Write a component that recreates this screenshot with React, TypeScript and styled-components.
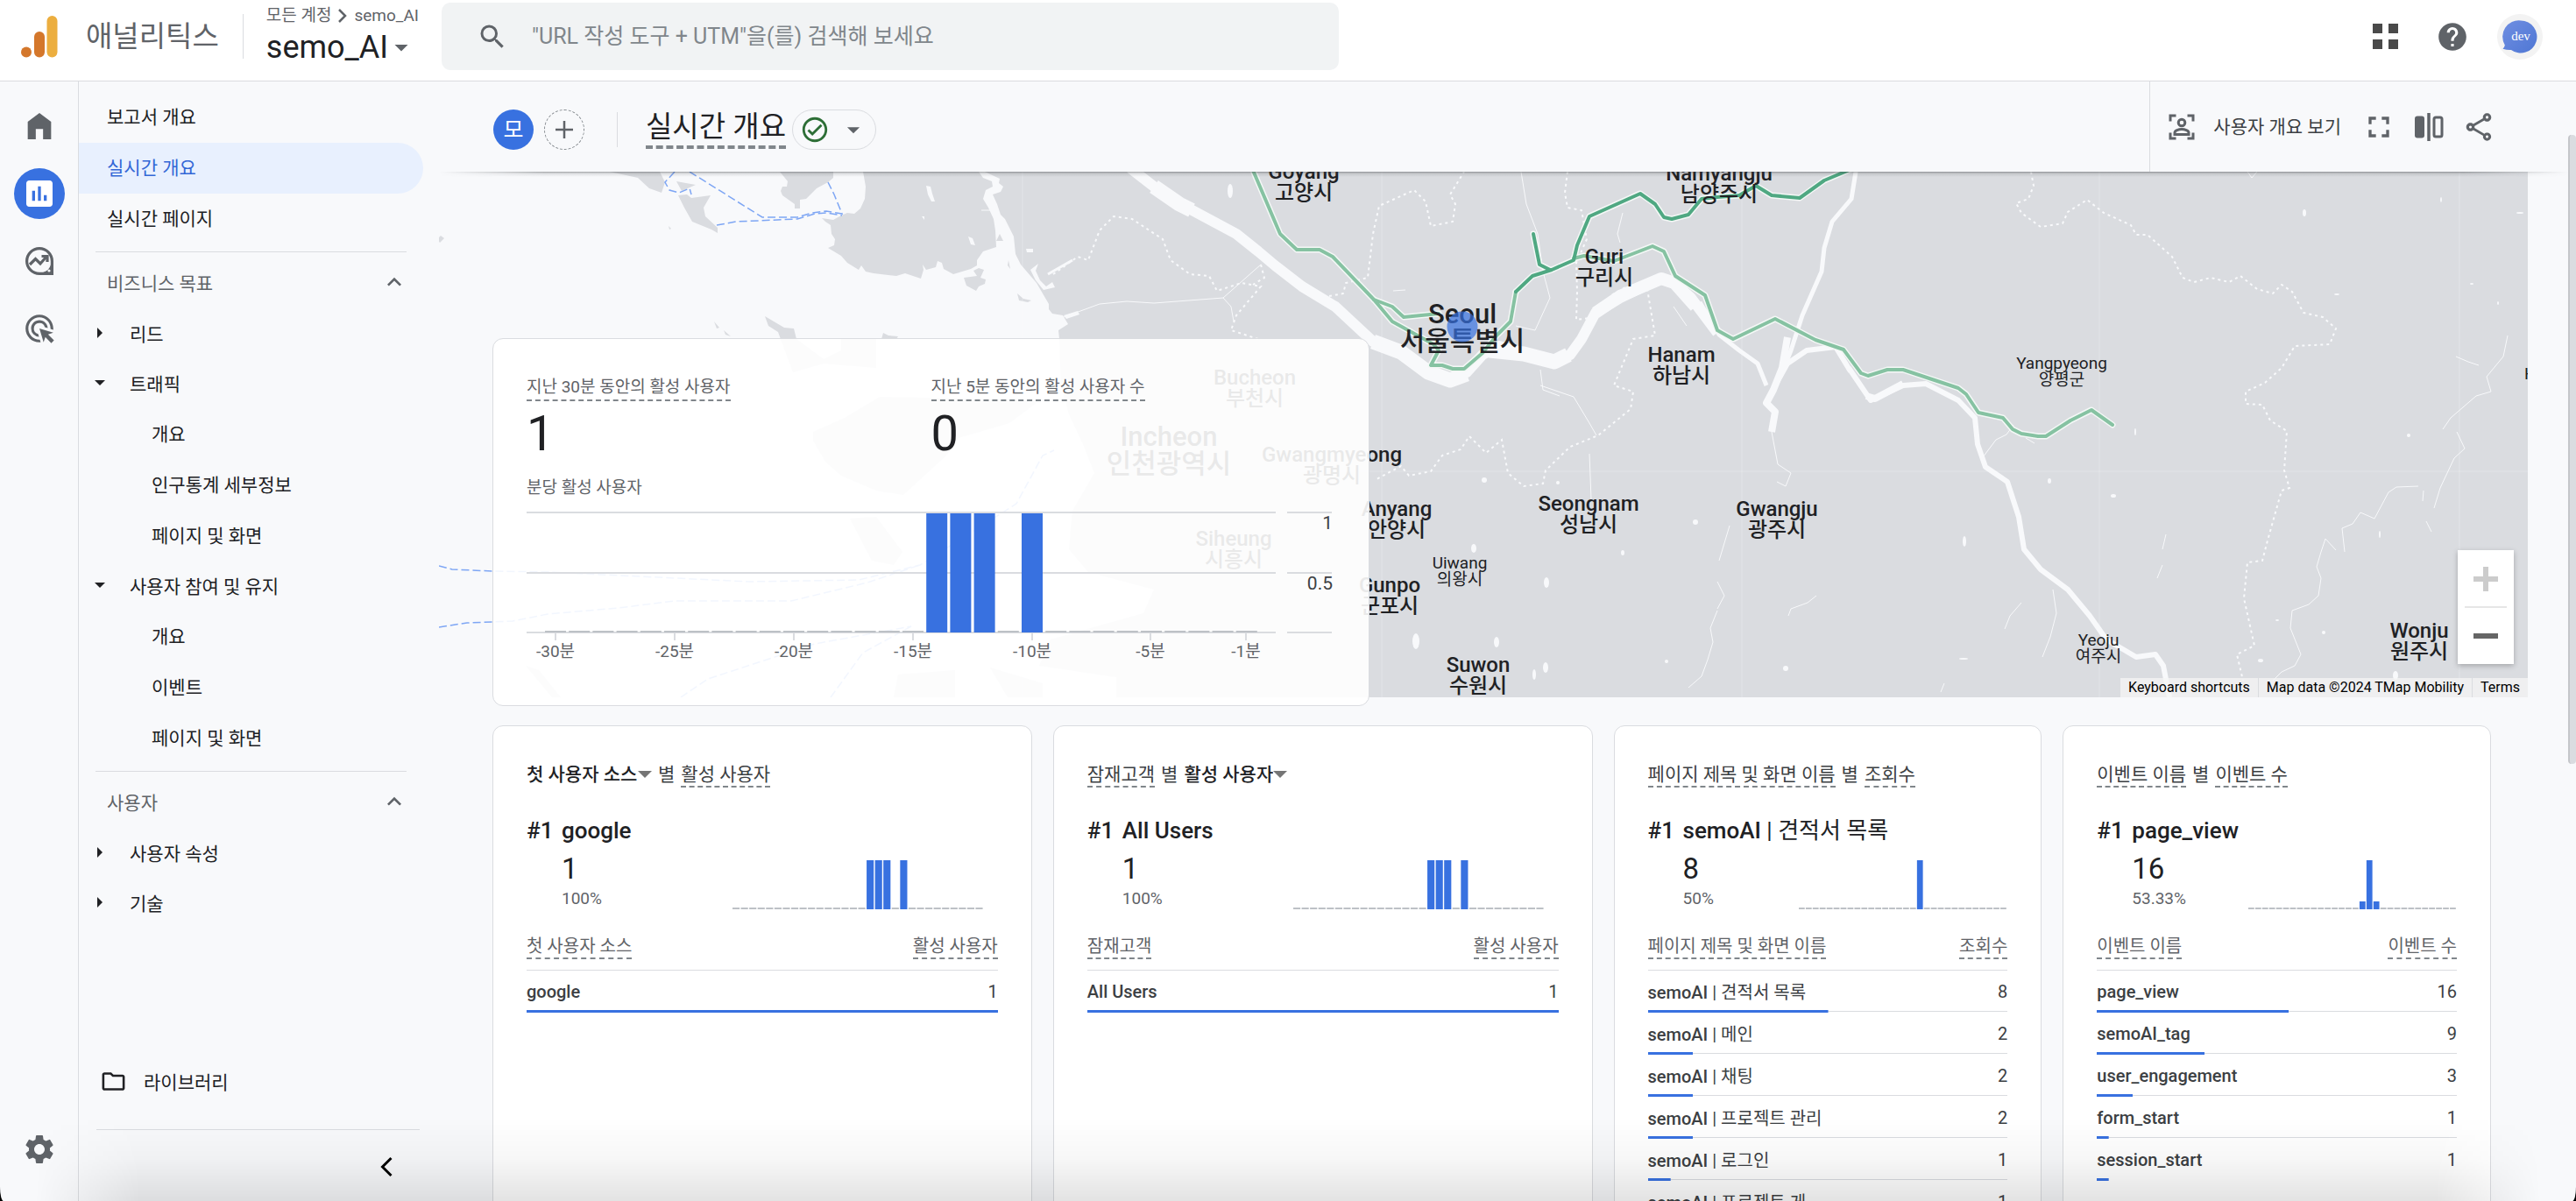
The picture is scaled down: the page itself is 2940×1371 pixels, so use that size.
import React from "react";
import styled, { createGlobalStyle, css } from "styled-components";
import {
  MdAdsClick,
  MdArrowDropDown,
  MdFullscreen,
  MdHelp,
  MdInsertChart,
  MdKeyboardArrowUp,
  MdOutlineCheckCircle,
  MdOutlineFolder,
  MdOutlineShare,
  MdSearch,
  MdSettings,
} from "react-icons/md";

const color = {
  text: "#202124",
  soft: "#3c4043",
  muted: "#5f6368",
  faint: "#80868b",
  line: "#dadce0",
  page: "#f8f9fb",
  land: "#dadce0",
  blue: "#3871e0",
  activeBg: "#e8f0fe",
  lightGreen: "#86c2a2",
  darkGreen: "#4fa882",
};

const GlobalStyle = createGlobalStyle`
  * { box-sizing: border-box; }
  body {
    margin: 0;
    background: #000;
    color: ${color.text};
    font-family: Roboto, "Noto Sans CJK KR", sans-serif;
    font-size: 21px;
  }
  button, input, select {
    font: inherit;
    color: inherit;
    background: none;
    border: 0;
    padding: 0;
    margin: 0;
  }
  button { cursor: pointer; }
  a { color: inherit; text-decoration: none; }
  ul { list-style: none; margin: 0; padding: 0; }
  h1, h2, p { margin: 0; font-weight: 400; }
`;

/* ---------- shell ---------- */

const Shell = styled.div`
  position: relative;
  display: flex;
  flex-direction: column;
  height: 100vh;
  overflow: hidden;
  background: ${color.page};
  border-radius: 0 0 4px 4px / 0 0 16px 16px;

  &::after {
    content: "";
    position: absolute;
    left: 0;
    right: 0;
    bottom: 0;
    height: 96px;
    pointer-events: none;
    background: linear-gradient(to bottom, rgba(0, 0, 0, 0), rgba(0, 0, 0, 0.03) 50%, rgba(0, 0, 0, 0.11));
    mask-image: linear-gradient(to right, transparent 40px, #000 160px, #000 calc(100% - 160px), transparent calc(100% - 40px));
  }
`;

const Body = styled.div`
  flex: 1;
  display: flex;
  min-height: 0;
`;

/* ---------- header ---------- */

const Header = styled.header`
  display: flex;
  align-items: center;
  height: 93px;
  flex: none;
  padding: 0 38px 9px 0;
  background: #fff;
  border-bottom: 1px solid ${color.line};
`;

const Brand = styled.div`
  display: flex;
  align-items: center;
  width: 504px;
  padding-left: 24px;
`;

const ProductName = styled.span`
  margin-left: 32px;
  padding-right: 27px;
  font-size: 33px;
  line-height: 51px;
  color: ${color.muted};
  border-right: 1px solid ${color.line};
  white-space: nowrap;
`;

const Property = styled.div`
  margin-left: 26px;
  white-space: nowrap;
`;

const Crumbs = styled.p`
  display: flex;
  align-items: center;
  gap: 8px;
  font-size: 19px;
  line-height: 24px;
  color: ${color.muted};
`;

const PropertyButton = styled.button`
  display: flex;
  align-items: center;
  font-size: 36px;
  line-height: 48px;
  svg { margin-left: -3px; color: ${color.muted}; }
`;

const SearchBox = styled.label`
  display: flex;
  align-items: center;
  flex: 0 1 1024px;
  height: 77px;
  padding: 0 40px;
  gap: 27px;
  color: ${color.muted};
  background: #f1f3f4;
  border-radius: 10px;
`;

const SearchInput = styled.input`
  flex: 1;
  font-size: 25px;
  outline: 0;
  &::placeholder { color: ${color.faint}; opacity: 1; }
`;

const HeaderActions = styled.div`
  display: flex;
  gap: 25px;
  margin-left: auto;
  color: ${color.muted};
`;

const HeaderButton = styled.button`
  display: grid;
  place-items: center;
  width: 52px;
  height: 52px;
  border-radius: 50%;
`;

/* ---------- icon rail ---------- */

const Rail = styled.nav`
  display: flex;
  flex-direction: column;
  align-items: center;
  gap: 19px;
  width: 90px;
  flex: none;
  padding: 22px 0 30px;
  border-right: 1px solid ${color.line};
`;

const RailLink = styled.a<{ $active?: boolean; $bottom?: boolean }>`
  display: grid;
  place-items: center;
  width: 58px;
  height: 58px;
  border-radius: 50%;
  color: ${(p) => (p.$active ? "#fff" : color.muted)};
  background: ${(p) => (p.$active ? color.blue : "transparent")};
  ${(p) => p.$bottom && css`margin-top: auto;`}
`;

/* ---------- report menu ---------- */

const Menu = styled.nav`
  display: flex;
  flex-direction: column;
  width: 411px;
  flex: none;
  padding-top: 12px;
`;

const MenuLink = styled.a<{ $active?: boolean; $level?: number }>`
  display: flex;
  align-items: center;
  height: 58px;
  margin-right: 18px;
  padding: 0 0 4px ${(p) => (p.$level === 2 ? 83 : 32)}px;
  border-radius: 0 29px 29px 0;
  color: ${(p) => (p.$active ? "#3367d6" : color.text)};
  background: ${(p) => (p.$active ? color.activeBg : "transparent")};
`;

const MenuToggle = styled.button`
  display: flex;
  align-items: center;
  gap: 26px;
  width: 100%;
  height: 57px;
  padding: 0 0 4px 16px;
`;

const MenuHeading = styled.button`
  display: flex;
  align-items: center;
  justify-content: space-between;
  height: 58px;
  padding: 0 35px 4px 32px;
  color: ${color.muted};
`;

const MenuRule = styled.hr`
  flex: none;
  height: 1px;
  margin: 8px 37px 7px 19px;
  border: 0;
  background: ${color.line};
`;

const MenuFoot = styled.div`
  margin-top: auto;
`;

const LibraryLink = styled.a`
  display: flex;
  align-items: center;
  gap: 19px;
  height: 58px;
  padding: 0 0 4px 24px;
`;

const FootRule = styled.hr`
  height: 1px;
  margin: 24px 22px 0 20px;
  border: 0;
  background: ${color.line};
`;

const CollapseRow = styled.div`
  display: flex;
  justify-content: flex-end;
  height: 81px;
  padding: 22px 40px 0 0;
`;

const IconButton = styled.button`
  display: grid;
  place-items: center;
  width: 40px;
  height: 40px;
`;

/* ---------- page toolbar ---------- */

const Main = styled.main`
  position: relative;
  flex: 1;
  min-width: 0;
`;

const Toolbar = styled.div`
  position: relative;
  z-index: 2;
  display: flex;
  align-items: center;
  height: 103px;
  padding-left: 62px;
  background: ${color.page};

  &::after {
    content: "";
    position: absolute;
    left: 0;
    right: 8px;
    top: 100%;
    height: 6px;
    background: linear-gradient(to bottom, rgba(60, 64, 67, 0.45), rgba(60, 64, 67, 0.12) 40%, rgba(60, 64, 67, 0));
    mask-image: linear-gradient(to right, transparent, #000 120px, #000 calc(100% - 120px), transparent);
  }
`;

const ToolbarLeft = styled.div`
  display: flex;
  align-items: center;
  padding-top: 6px;
`;

const RoundButton = styled.button<{ $filled?: boolean }>`
  display: grid;
  place-items: center;
  width: 46px;
  height: 46px;
  margin-right: 12px;
  padding-bottom: ${(p) => (p.$filled ? 4 : 0)}px;
  border-radius: 50%;
  font-size: 25px;
  color: ${(p) => (p.$filled ? "#fff" : color.muted)};
  background: ${(p) => (p.$filled ? color.blue : "transparent")};
  border: ${(p) => (p.$filled ? "0" : `1px dashed ${color.faint}`)};
`;

const ToolbarRule = styled.span`
  width: 1px;
  height: 40px;
  margin: 0 32px 0 25px;
  background: ${color.line};
`;

const PageTitle = styled.h1`
  padding-bottom: 2px;
  font-size: 33px;
  line-height: 38px;
  border-bottom: 4px dashed ${color.faint};
`;

const StatusPill = styled.button`
  display: flex;
  align-items: center;
  justify-content: space-between;
  width: 96px;
  height: 46px;
  margin-left: 7px;
  padding: 0 8px;
  border: 1px solid ${color.line};
  border-radius: 23px;
  color: ${color.muted};
`;

const ToolbarRight = styled.div`
  display: flex;
  align-items: center;
  align-self: stretch;
  gap: 17px;
  margin-left: auto;
  padding: 0 91px 0 16px;
  border-left: 1px solid ${color.line};
  color: ${color.muted};
`;

const OverviewButton = styled.button`
  display: flex;
  align-items: center;
  gap: 16px;
  margin-right: 6px;
  color: ${color.soft};
  white-space: nowrap;
  svg { color: ${color.muted}; }
  span { padding-bottom: 4px; }
`;

const ScrollThumb = styled.div`
  position: absolute;
  z-index: 3;
  top: 61px;
  right: 0;
  width: 9px;
  height: 718px;
  border-left: 2px solid #c4c6ca;
  border-radius: 4px;
  background: ${color.line};
`;

/* ---------- map + live card ---------- */

const MapSection = styled.section`
  display: grid;
  > * { grid-area: 1 / 1; }
`;

const MapFrame = styled.div`
  position: relative;
  height: 600px;
  margin-right: 55px;
  overflow: hidden;
`;

const MapDrawing = styled.svg`
  display: block;
  width: 100%;
  height: 100%;
`;

const ZoomControl = styled.div`
  position: absolute;
  right: 16px;
  bottom: 38px;
  width: 64px;
  background: #fff;
  box-shadow: 0 2px 6px rgba(0, 0, 0, 0.25);
`;

const ZoomButton = styled.button<{ $muted?: boolean }>`
  display: grid;
  place-items: center;
  width: 64px;
  height: 65px;
  color: ${(p) => (p.$muted ? "#ccc" : "#666")};
`;

const ZoomRule = styled.div`
  position: absolute;
  left: 8px;
  right: 8px;
  top: 64px;
  height: 2px;
  background: #e6e6e6;
`;

const MapCredits = styled.div`
  position: absolute;
  right: 0;
  bottom: 0;
  display: flex;
  gap: 1px;
  font-size: 16px;
  line-height: 22px;
  color: #000;
  > * {
    padding: 0 9px;
    background: rgba(245, 245, 245, 0.75);
  }
`;

const LiveCard = styled.article`
  z-index: 1;
  align-self: start;
  width: 1001px;
  height: 420px;
  margin: 190px 0 0 61px;
  padding: 41px 38px 0;
  background: rgba(255, 255, 255, 0.9);
  border: 1px solid ${color.line};
  border-radius: 12px;
`;

const LiveStats = styled.div`
  display: grid;
  grid-template-columns: 1fr 1fr;
`;

const LiveStat = styled.div`
  display: flex;
  flex-direction: column;
  align-items: flex-start;
`;

const LiveLabel = styled.p`
  font-size: 19px;
  line-height: 28px;
  color: ${color.muted};
`;

const Hinted = styled.span<{ $tone?: string }>`
  display: inline-block;
  color: ${(p) => p.$tone ?? "inherit"};
  border-bottom: 2px dashed ${color.faint};
`;

const LiveValue = styled.p`
  margin: 3px 0 14px;
  font-size: 56px;
  line-height: 68px;
`;

const LiveChart = styled.svg`
  display: block;
  width: 100%;
  margin-top: 6px;
`;

/* ---------- report cards ---------- */

const Cards = styled.section`
  display: grid;
  grid-template-columns: 63fr 63fr 50fr 50fr;
  gap: 24px;
  margin: 22px 97px 0 61px;
`;

const Card = styled.article`
  min-width: 0;
  height: 600px;
  padding: 42px 38px 0;
  background: #fff;
  border: 1px solid ${color.line};
  border-radius: 12px;
`;

const CardTitle = styled.h2`
  display: flex;
  align-items: flex-start;
  gap: 7px;
  height: 28px;
  font-size: 21px;
  line-height: 26px;
  color: ${color.soft};
  white-space: nowrap;
`;

const Picker = styled.label`
  display: flex;
  align-items: center;
  font-weight: 500;
  color: ${color.text};
`;

const PickerSelect = styled.select`
  appearance: none;
  height: 26px;
  line-height: 26px;
  outline: 0;
`;

const Top = styled.div`
  display: grid;
  grid-template-columns: 40px 1fr;
  margin-top: 33px;
  font-size: 26px;
  line-height: 32px;
  font-weight: 500;
  white-space: nowrap;
`;

const Regular = styled.span`
  font-weight: 400;
`;

const Summary = styled.div`
  display: flex;
  justify-content: space-between;
  align-items: flex-end;
  margin-top: 8px;
  padding-left: 40px;
`;

const SummaryValue = styled.p`
  font-size: 33px;
  line-height: 40px;
`;

const SummaryShare = styled.p`
  font-size: 19px;
  line-height: 28px;
  color: ${color.muted};
`;

const Spark = styled.svg<{ $inset: number }>`
  width: ${(p) => (p.$inset ? 287 : 238)}px;
  height: 56px;
  margin: 0 ${(p) => p.$inset}px 2px 0;
`;

const Table = styled.table`
  width: 100%;
  margin-top: 27px;
  border-collapse: collapse;
  font-size: 20px;
  color: ${color.soft};
`;

const HeadCell = styled.th<{ $end?: boolean }>`
  padding: 0 0 12px;
  font-size: 20px;
  font-weight: 400;
  line-height: 26px;
  text-align: ${(p) => (p.$end ? "right" : "left")};
  border-bottom: 1px solid ${color.line};
`;

const Row = styled.tr<{ $share: number }>`
  height: 48px;
  background-image: linear-gradient(${color.blue}, ${color.blue}), linear-gradient(${color.line}, ${color.line});
  background-repeat: no-repeat;
  background-position: left bottom, left bottom 1px;
  background-size: ${(p) => p.$share}% 3px, 100% 1px;
  &:last-child { background-size: ${(p) => p.$share}% 3px, 0 0; }
`;

const NameCell = styled.td`
  padding: 0;
  font-weight: 500;
  white-space: nowrap;
`;

const CountCell = styled.td`
  padding: 0;
  text-align: right;
`;

/* ---------- icons ---------- */

const Logo = () => (
  <svg width="42" height="48" viewBox="0 0 42 48" aria-hidden="true">
    <circle cx="6" cy="41.5" r="6" fill="#d4772b" />
    <rect x="15" y="18" width="12" height="29.5" rx="6" fill="#d4772b" />
    <rect x="29.5" y="0" width="12" height="47.5" rx="6" fill="#ecae3f" />
  </svg>
);

const HomeIcon = () => (
  <svg width="40" height="40" viewBox="0 0 24 24" fill="currentColor" aria-hidden="true">
    <path d="M4 21V9l8-6 8 6v12h-5.5v-7h-5v7z" />
  </svg>
);

const ExploreIcon = () => (
  <svg width="34" height="34" viewBox="0 0 34 34" fill="none" stroke="currentColor" strokeWidth="3.2" aria-hidden="true">
    <path d="M17 31.4A14.4 14.4 0 1 1 31.4 17v14.4z" />
    <path d="M6 21l6.5-6.5 5.5 5.5 7-8" />
    <path d="M19.5 11.5h6.5v6.5" />
    <path d="M31.4 22v9.4H22a14 14 0 0 0 9.4-9.4z" fill="currentColor" />
    <circle cx="28" cy="28" r="1.6" fill={color.page} stroke="none" />
  </svg>
);

const AppsIcon = () => (
  <svg width="29" height="29" viewBox="0 0 29 29" fill="#4a4a4a" aria-hidden="true">
    <path d="M0 0h11v11H0zM18 0h11v11H18zM0 18h11v11H0zM18 18h11v11H18z" />
  </svg>
);

const AvatarIcon = () => (
  <svg width="52" height="52" viewBox="0 0 52 52" aria-hidden="true">
    <defs>
      <linearGradient id="avatarFill" x1="0" y1="0" x2="1" y2="1">
        <stop offset="0" stopColor="#6f8ee2" />
        <stop offset="1" stopColor="#4f77d4" />
      </linearGradient>
    </defs>
    <circle cx="26" cy="26" r="26" fill="#f3f3f3" />
    <path
      d="M27 7.5a18.5 18.5 0 1 1-11 33.4c-3 .2-6.5-.2-9.5-1.2 1.2-1.2 2-2.6 2.3-4.3A18.500 18.500 0 0 1 27 7.5z"
      fill="url(#avatarFill)"
    />
    <text x="27" y="30" fontFamily="'Liberation Serif', serif" fontSize="15" fill="#fff" textAnchor="middle">
      dev
    </text>
  </svg>
);

const PersonFrameIcon = () => (
  <svg width="40" height="40" viewBox="0 0 40 40" fill="none" stroke="currentColor" strokeWidth="3" aria-hidden="true">
    <path d="M7 13.5V7h6.5M26.5 7H33v6.5M33 26.5V33h-6.5M13.5 33H7v-6.5" />
    <circle cx="20" cy="15" r="3.8" />
    <path d="M12 28.5v-2c0-2.5 4.5-4 8-4s8 1.5 8 4v2z" />
  </svg>
);

const CompareIcon = () => (
  <svg width="40" height="40" viewBox="0 0 40 40" fill="none" stroke="currentColor" aria-hidden="true">
    <rect x="4" y="7.5" width="11" height="25" rx="3" fill="currentColor" stroke="none" />
    <path d="M20 4v32" strokeWidth="3.5" />
    <rect x="26" y="9" width="9" height="22" rx="2" strokeWidth="3" />
  </svg>
);

const PlusIcon = () => (
  <svg width="24" height="24" viewBox="0 0 24 24" stroke="currentColor" strokeWidth="2.5" aria-hidden="true">
    <path d="M12 2v20M2 12h20" />
  </svg>
);

const CrumbArrow = () => (
  <svg width="10" height="18" viewBox="0 0 10 18" fill="none" stroke="currentColor" strokeWidth="2.5" aria-hidden="true">
    <path d="M1 2l7 7-7 7" />
  </svg>
);

const CollapseIcon = () => (
  <svg width="16" height="24" viewBox="0 0 16 24" fill="none" stroke="#000" strokeWidth="3" aria-hidden="true">
    <path d="M13.5 2L3.5 12l10 10" />
  </svg>
);

const ToggleArrow = ({ open }: { open?: boolean }) => (
  <svg width="16" height="16" viewBox="0 0 16 16" fill={color.text} aria-hidden="true">
    <path d={open ? "M2 5h12L8 11z" : "M5 2v12l6-6z"} />
  </svg>
);

const CaretIcon = () => (
  <svg width="16" height="10" viewBox="0 0 16 10" fill="#757575" aria-hidden="true">
    <path d="M0 1h16L8 9z" />
  </svg>
);

const ZoomGlyph = ({ plus }: { plus?: boolean }) => (
  <svg width="30" height="30" viewBox="0 0 30 30" fill="currentColor" aria-hidden="true">
    <path d={plus ? "M12 1h6v11h11v6H18v11h-6V18H1v-6h11z" : "M1 12h28v6H1z"} />
  </svg>
);

/* ---------- map ---------- */

type Place = [x: number, y: number, latin: string, korean: string, size: number];

const places: Place[] = [
  [1488, 204, "Goyang", "고양시", 24],
  [1962, 206, "Namyangju", "남양주시", 24],
  [1831, 301, "Guri", "구리시", 24],
  [1669, 369, "Seoul", "서울특별시", 31],
  [1919, 413, "Hanam", "하남시", 24],
  [2353, 421, "Yangpyeong", "양평군", 19],
  [1432, 439, "Bucheon", "부천시", 24],
  [1334, 509, "Incheon", "인천광역시", 31],
  [1520, 527, "Gwangmyeong", "광명시", 24],
  [1594, 589, "Anyang", "안양시", 24],
  [1813, 583, "Seongnam", "성남시", 24],
  [2028, 589, "Gwangju", "광주시", 24],
  [1408, 623, "Siheung", "시흥시", 24],
  [1586, 676, "Gunpo", "군포시", 24],
  [1666, 649, "Uiwang", "의왕시", 19],
  [1687, 767, "Suwon", "수원시", 24],
  [2395, 737, "Yeoju", "여주시", 19],
  [2761, 728, "Wonju", "원주시", 24],
];

const land = [
  "M696 196H753L759 208 755 220 741 215 728 203z",
  "M772 207L794 211 778 218z",
  "M774 223L784 222 789 226 811 223 803 237 805 247 819 260 819 266 812 262 790 253 781 237z",
  "M499 273L503 269 507 272 502 277z",
  "M763 258l3 3-2 1z",
  "M890 196L899 207 898 213 893 213 891 218 893 223 907 233V238H913V228L920 227 932 215 945 208 951 203V196z",
  "M985 196L988 213 987 227 982 238 975 244 967 243 960 246 951 251 938 249 942 253 948 257 949 267 953 273 952 280 945 283 960 292 967 300 980 308 983 303 988 310 997 312 1023 315 1033 312 1051 318 1054 308 1053 302 1057 308 1068 305 1070 298 1075 300 1077 307 1088 313 1108 307 1115 303V297L1122 287 1137 282 1136 263 1134 250 1128 237 1122 227 1125 217 1133 213 1132 207 1122 203 1117 196z",
  "M1100 317L1115 315 1111 309 1117 306 1123 308 1119 317 1125 319 1124 324 1117 327 1114 332 1103 326z",
  "M1161 335L1168 341 1177 343 1173 345 1163 343z",
  "M1141 267l4 8h-8z",
  "M1151 297l2 10-3-4z",
  "M873 361L895 374 906 375 909 387 940 410 960 400 960 386 1000 386 1000 420 940 415 905 425 888 379 877 372z",
  "M815 367l6 7-3 1zM826 377l8 7-6-2z",
  "M1006 387l2-7 6 3 11 1-2 3zM1045 386h6v1h-6z",
  "M928 493L964 477 1004 453 1187 457 1152 483 1094 500 1080 520 1031 565 1000 560 960 543 942 527 928 503z",
  "M970 592L1000 590 1030 630 1020 645 995 640z",
  "M1020 796L1025 770 1090 765 1090 796z",
  "M1130 762L1190 780 1190 796H1150z",
  "M600 760L615 765 640 796H630z",
  "M1124 196L1141 204 1140 209 1145 213 1142 219 1133 222 1138 233 1142 245 1147 250 1157 270 1159 290 1165 302 1183 323 1197 347 1197 353 1201 358 1213 360 1219 370 1208 377 1209 387 1211 440 1220 473 1236 507 1249 540 1224 583 1220 627 1242 653 1317 673 1305 700 1199 730 1186 760 1274 773V796H2885V196z",
];

const inlets = [
  "M1057 212L1062 213 1064 221 1067 230 1063 230 1059 222z",
  "M1105 270L1110 272 1113 280 1108 279z",
  "M1052 247h3v4z",
  "M1171 284h8v4h-7z",
  "M1176 308L1185 301 1182 309 1187 320 1194 327 1201 322 1204 328 1191 331 1182 320z",
  "M1214 360L1230 355 1232 359 1217 364z",
];

const han =
  "M1290 192L1317 213 1342 230 1411 267 1436 287 1455 303 1486 327 1524 350 1567 390 1599 400 1630 423 1655 433 1674 425 1692 405 1711 395 1739 403 1774 413 1792 405 1805 387 1821 357 1849 340 1874 328 1896 318 1911 323 1930 340 1960 380";
const southHan =
  "M2110 420L2135 457 2172 440 2198 438 2235 457 2254 477 2257 507 2266 533 2291 550 2304 590 2310 627 2329 650 2360 673 2385 703 2404 730 2438 750 2460 747 2469 760 2476 796";
const northHan =
  "M2119 190L2113 227 2091 253 2082 283 2079 310 2057 360 2044 400 2032 430";

const streams = [
  "M2022 493L2029 530 2044 540 2038 555 2028 550",
  "M1214 362L1255 347 1286 344 1317 346 1396 340 1439 302",
  "M1396 340L1405 350 1408 367",
  "M2862 383L2857 407 2838 430 2843 447 2826 452 2797 477 2788 490",
  "M2804 493L2813 512 2801 523 2785 557 2778 580",
  "M2760 555L2735 556 2726 562 2710 592 2694 585 2685 598 2673 603 2676 630",
  "M2666 628L2654 615 2649 630 2644 647 2649 660 2646 680 2635 690 2616 697 2614 717 2626 747 2619 760 2604 767 2594 777",
  "M1758 440L1796 453 1814 483 1822 497",
  "M1814 518L1816 570",
  "M1960 697L1952 717 1955 733 1949 753 1942 772 1927 785",
  "M1736 196L1742 233 1755 267 1761 310 1769 340 1752 377 1730 372",
  "M1852 243L1846 267 1849 277",
  "M1758 422L1761 445 1780 452",
  "M2073 680L2063 688 2044 695 2041 703",
  "M2307 688L2294 703 2288 718",
  "M2343 673L2347 700 2340 727 2331 750",
  "M2263 522L2278 502 2290 496 2298 485M2312 500l10 6",
  "M1910 350L1925 372M1590 332L1604 331M1120 240h18",
  "M1974 600L1962 640M1960 664L1968 680 1960 695",
  "M2472 610L2468 627M2468 645L2462 660",
  "M2565 196L2570 203 2576 196M2766 560L2765 572M2769 595l6 12",
  "M2215 790l4-10M2803 407l14 6 12 4",
];

const boundaries = [
  "M1202 313L1230 293 1242 297 1255 263 1271 247 1292 250 1327 273 1336 297 1358 313 1380 315 1389 332 1417 323 1439 327 1411 360 1405 377 1436 387",
  "M1439 302L1443 317 1430 325",
  "M1517 338L1533 335 1536 323 1561 317 1567 267 1574 235 1614 217 1627 230 1633 258 1658 253 1661 233 1655 222 1671 196",
  "M1789 196L1786 220 1789 237 1805 240 1811 273 1799 300 1800 333 1799 365 1814 363 1839 337 1855 328 1880 330 1889 383 1864 387 1842 440 1864 447 1861 467 1824 497 1792 510 1764 537 1761 552 1739 555 1721 540 1714 502 1696 517 1677 498 1667 513 1646 520 1633 538 1608 543 1599 532 1571 547",
  "M2318 196L2321 212 2315 227 2301 232 2307 243 2329 259 2354 255 2360 242 2382 228 2401 243 2432 257 2438 268 2451 268 2479 293 2491 317 2504 322 2523 317 2544 322 2557 315 2576 330 2594 335 2604 325 2616 333 2629 357 2651 362 2666 375 2659 393 2619 395 2604 420 2585 437 2563 447 2563 461 2582 462 2591 480 2610 492 2607 537 2613 557 2604 560 2588 617 2582 640 2565 642 2561 683 2573 737 2553 747 2560 777",
];

const ferries = [
  "M787 196L870 248 910 248 927 243 943 241 961 244 952 222 945 208",
  "M818 257L840 253 910 250 930 244 943 243 961 246",
  "M770 196L759 208 764 217 775 220 787 215 789 222",
  "M501 646L516 650 562 652 625 653 855 664 980 662 1050 645 1160 575 1190 520 1203 514",
  "M501 716L533 711 585 709 625 701 706 694 770 686 903 686 990 665 1050 645",
  "M777 796L808 775 930 735 1040 715M948 796L985 745 1040 715",
];

const lightRoutes = [
  "M1429 192L1461 267 1480 285 1506 285 1521 293 1568 342 1589 350 1602 362 1642 358",
  "M1568 342L1589 367 1636 393 1642 400 1633 417 1646 417 1658 421 1671 421 1692 403 1708 383 1724 367 1730 333",
  "M1796 295L1808 292 1842 298 1886 281 1899 287 1912 315 1946 337 1960 377 1978 387 2026 364 2072 388 2104 399 2124 426 2132 429 2154 422 2172 422 2235 443 2244 450 2258 471 2286 477 2297 490 2307 495 2326 498 2335 498 2363 480 2387 468 2411 485",
];

const darkRoutes = [
  "M1730 333L1749 315 1771 308 1796 297 1800 280 1814 247 1872 221 1889 233 1899 248 1908 250 1927 245 1942 227 1960 225 1985 223 2004 212 2022 223 2054 226 2082 206 2120 190",
  "M1750 267L1757 302 1769 308",
];

const ponds: [number, number, number, number][] = [
  [1694, 548, 3, 3], [1778, 551, 2, 2], [1682, 626, 3, 5], [1765, 665, 3, 6], [1616, 732, 4, 9],
  [1708, 733, 3, 6], [1764, 762, 3, 6], [1751, 770, 2, 6], [1935, 596, 3, 3], [1852, 631, 2, 3],
  [1902, 755, 2, 2], [2339, 549, 2, 3], [2412, 566, 3, 2], [2242, 618, 2, 6], [2437, 493, 1, 4],
  [2038, 763, 3, 3], [2241, 752, 5, 1], [2580, 754, 3, 2], [2734, 771, 3, 5], [2652, 722, 2, 2],
  [2599, 708, 2, 1], [2716, 610, 1, 4], [2749, 497, 2, 2], [2630, 243, 2, 4], [2786, 228, 1, 3],
  [2821, 324, 2, 1], [2667, 336, 3, 1], [2851, 346, 1, 2], [1404, 218, 3, 8], [2876, 243, 4, 1],
];

const RegionMap = () => (
  <MapDrawing viewBox="501 196 2384 600" preserveAspectRatio="xMidYMin slice" role="img" aria-label="활성 사용자 지도">
    <g fill={color.land}>
      {land.map((d) => <path key={d} d={d} />)}
    </g>
    <g fill={color.page}>
      {inlets.map((d) => <path key={d} d={d} />)}
      {ponds.map(([x, y, rx, ry]) => <ellipse key={`${x}-${y}`} cx={x} cy={y} rx={rx} ry={ry} />)}
    </g>
    <path
      d="M1167 196V796M1577 196V796M1988 196V796M2396 196V796M2807 196V796M1250 538H2885"
      stroke="#fff"
      strokeOpacity="0.25"
      fill="none"
    />
    <g fill="none" stroke={color.page} strokeLinejoin="round">
      <path d={han} strokeWidth="12" />
      <path d="M1317 213L1346 233 1360 240M1567 390L1599 402 1630 425 1655 434 1674 427" strokeWidth="17" />
      <path d="M1700 400L1739 404 1774 413 1790 405" strokeWidth="17" />
      <path d="M1821 357L1849 338 1896 318 1911 323 1935 350" strokeWidth="14" />
      <path d="M1940 345L1962 382 1985 400 2006 415 2016 440" strokeWidth="5" />
      <path d={northHan} strokeWidth="5" />
      <path d="M2040 385L2034 420 2024 445 2016 460 2026 470 2022 493" strokeWidth="8" />
      <path d="M2026 440L2040 415 2062 400 2095 396 2112 424" strokeWidth="6" />
      <path d={southHan} strokeWidth="6" />
      <path d="M2130 452L2140 455 2172 438" strokeWidth="8" />
      <path d="M1196 313L1224 297" strokeWidth="3" />
      {streams.map((d) => <path key={d} d={d} strokeWidth="1" />)}
    </g>
    <g fill="none" stroke={color.page} strokeWidth="2" strokeDasharray="3 4">
      {boundaries.map((d) => <path key={d} d={d} />)}
    </g>
    <g fill="none" stroke="#7ea6f4" strokeWidth="1.5" strokeDasharray="9 4">
      {ferries.map((d) => <path key={d} d={d} />)}
    </g>
    <g fill="none" strokeLinejoin="round" strokeLinecap="round">
      {[...lightRoutes, ...darkRoutes].map((d) => <path key={d} d={d} stroke="#f4f8f6" strokeWidth="7" />)}
      {lightRoutes.map((d) => <path key={d} d={d} stroke={color.lightGreen} strokeWidth="4" />)}
      {darkRoutes.map((d) => <path key={d} d={d} stroke={color.darkGreen} strokeWidth="4" />)}
    </g>
    <g fill={color.text} textAnchor="middle">
      {places.map(([x, y, latin, korean, size]) => (
        <g key={latin} fontSize={size} fontWeight={size > 19 ? 500 : 400}>
          <text x={x} y={y}>{latin}</text>
          <text x={x} y={y + size}>{korean}</text>
        </g>
      ))}
      <text x="2881" y="433" fontSize="19" textAnchor="start">H</text>
    </g>
    <circle cx="1669" cy="373" r="17.5" fill={color.blue} fillOpacity="0.7" />
  </MapDrawing>
);

/* ---------- charts ---------- */

const liveBars = [16, 17, 18, 20];
const ticks: [number, string][] = [
  [33, "-30분"], [169, "-25분"], [305, "-20분"], [441, "-15분"], [577, "-10분"], [712, "-5분"], [821, "-1분"],
];

const MinuteChart = () => (
  <LiveChart viewBox="0 0 923 184" role="img" aria-label="분당 활성 사용자">
    <path d="M0 8h855M0 77h855M0 145h855M868 8h51M868 77h51M868 145h51" stroke={color.line} strokeWidth="2" />
    {Array.from({ length: 30 }, (_, i) => {
      const active = liveBars.includes(i);
      return (
        <rect
          key={i}
          x={21 + i * 27.2}
          y={active ? 9 : 143}
          width="24"
          height={active ? 136 : 2}
          fill={active ? color.blue : "#bdc1c6"}
        />
      );
    })}
    <g fontSize="19" fill={color.muted} textAnchor="middle">
      {ticks.map(([x, label]) => (
        <g key={label}>
          <path d={`M${x} 146v8`} stroke={color.line} strokeWidth="2" />
          <text x={x} y="173">{label}</text>
        </g>
      ))}
    </g>
    <g fontSize="21" fill={color.soft} textAnchor="end">
      <text x="920" y="27">1</text>
      <text x="920" y="96">0.5</text>
    </g>
  </LiveChart>
);

const Sparkline = ({ bars, wide }: { bars: Record<number, number>; wide?: boolean }) => (
  <Spark $inset={wide ? 16 : 0} viewBox="0 0 300 56" preserveAspectRatio="none" aria-hidden="true">
    {Array.from({ length: 30 }, (_, i) => {
      const h = bars[i] ?? 0;
      return (
        <rect key={i} x={i * 10} y={h ? 56 - h : 54} width="8.5" height={h || 2} fill={h ? color.blue : "#bdc1c6"} />
      );
    })}
  </Spark>
);

/* ---------- data ---------- */

type ReportRow = { name: string; count: number; share: number };
type Report = {
  id: string;
  title: React.ReactNode;
  top: string;
  value: string;
  share: string;
  bars: Record<number, number>;
  wide?: boolean;
  dimension: string;
  metric: string;
  rows: ReportRow[];
};

const TitlePicker = ({ label }: { label: string }) => (
  <Picker>
    <PickerSelect aria-label={label} defaultValue={label}>
      <option>{label}</option>
    </PickerSelect>
    <CaretIcon />
  </Picker>
);

/* Latin names are set in medium, the part after the divider in regular. */
const ItemName = ({ name }: { name: string }) => {
  const at = name.indexOf("|");
  if (at < 0) return <span>{name}</span>;
  return (
    <span>
      {name.slice(0, at)}
      <Regular>{name.slice(at)}</Regular>
    </span>
  );
};

const activeBars = { 16: 56, 17: 56, 18: 56, 20: 56 };

const reports: Report[] = [
  {
    id: "source",
    title: <><TitlePicker label="첫 사용자 소스" /><span>별</span><Hinted>활성 사용자</Hinted></>,
    top: "google",
    value: "1",
    share: "100%",
    bars: activeBars,
    wide: true,
    dimension: "첫 사용자 소스",
    metric: "활성 사용자",
    rows: [{ name: "google", count: 1, share: 100 }],
  },
  {
    id: "audience",
    title: <><Hinted>잠재고객</Hinted><span>별</span><TitlePicker label="활성 사용자" /></>,
    top: "All Users",
    value: "1",
    share: "100%",
    bars: activeBars,
    wide: true,
    dimension: "잠재고객",
    metric: "활성 사용자",
    rows: [{ name: "All Users", count: 1, share: 100 }],
  },
  {
    id: "pages",
    title: <><Hinted>페이지 제목 및 화면 이름</Hinted><span>별</span><Hinted>조회수</Hinted></>,
    top: "semoAI | 견적서 목록",
    value: "8",
    share: "50%",
    bars: { 17: 56 },
    dimension: "페이지 제목 및 화면 이름",
    metric: "조회수",
    rows: [
      { name: "semoAI | 견적서 목록", count: 8, share: 50 },
      { name: "semoAI | 메인", count: 2, share: 12.5 },
      { name: "semoAI | 채팅", count: 2, share: 12.5 },
      { name: "semoAI | 프로젝트 관리", count: 2, share: 12.5 },
      { name: "semoAI | 로그인", count: 1, share: 6.25 },
      { name: "semoAI | 프로젝트 게", count: 1, share: 6.25 },
    ],
  },
  {
    id: "events",
    title: <><Hinted>이벤트 이름</Hinted><span>별</span><Hinted>이벤트 수</Hinted></>,
    top: "page_view",
    value: "16",
    share: "53.33%",
    bars: { 16: 9, 17: 56, 18: 9 },
    dimension: "이벤트 이름",
    metric: "이벤트 수",
    rows: [
      { name: "page_view", count: 16, share: 53.33 },
      { name: "semoAI_tag", count: 9, share: 30 },
      { name: "user_engagement", count: 3, share: 10 },
      { name: "form_start", count: 1, share: 3.33 },
      { name: "session_start", count: 1, share: 3.33 },
    ],
  },
];

const ReportCard = ({ report }: { report: Report }) => (
  <Card>
    <CardTitle>{report.title}</CardTitle>
    <Top>
      <span>#1</span>
      <ItemName name={report.top} />
    </Top>
    <Summary>
      <div>
        <SummaryValue>{report.value}</SummaryValue>
        <SummaryShare>{report.share}</SummaryShare>
      </div>
      <Sparkline bars={report.bars} wide={report.wide} />
    </Summary>
    <Table>
      <thead>
        <tr>
          <HeadCell scope="col"><Hinted $tone={color.muted}>{report.dimension}</Hinted></HeadCell>
          <HeadCell scope="col" $end><Hinted $tone={color.muted}>{report.metric}</Hinted></HeadCell>
        </tr>
      </thead>
      <tbody>
        {report.rows.map((row) => (
          <Row key={row.name} $share={row.share}>
            <NameCell><ItemName name={row.name} /></NameCell>
            <CountCell>{row.count}</CountCell>
          </Row>
        ))}
      </tbody>
    </Table>
  </Card>
);

type MenuGroup = { label: string; items?: string[] };

const businessGroups: MenuGroup[] = [
  { label: "리드" },
  { label: "트래픽", items: ["개요", "인구통계 세부정보", "페이지 및 화면"] },
  { label: "사용자 참여 및 유지", items: ["개요", "이벤트", "페이지 및 화면"] },
];
const userGroups: MenuGroup[] = [{ label: "사용자 속성" }, { label: "기술" }];

const MenuGroups = ({ groups }: { groups: MenuGroup[] }) => (
  <ul>
    {groups.map((group) => (
      <li key={group.label}>
        <MenuToggle aria-expanded={Boolean(group.items)}>
          <ToggleArrow open={Boolean(group.items)} />
          {group.label}
        </MenuToggle>
        {group.items && (
          <ul>
            {group.items.map((item) => (
              <li key={item}><MenuLink href="#" $level={2}>{item}</MenuLink></li>
            ))}
          </ul>
        )}
      </li>
    ))}
  </ul>
);

export default function App() {
  return (
    <>
      <GlobalStyle />
      <Shell>
        <Header>
          <Brand>
            <Logo />
            <ProductName>애널리틱스</ProductName>
            <Property>
              <Crumbs><span>모든 계정</span><CrumbArrow /><span>semo_AI</span></Crumbs>
              <PropertyButton>semo_AI<MdArrowDropDown size={36} /></PropertyButton>
            </Property>
          </Brand>
          <SearchBox>
            <MdSearch size={36} />
            <SearchInput type="search" aria-label="검색" placeholder={'"URL 작성 도구 + UTM"을(를) 검색해 보세요'} />
          </SearchBox>
          <HeaderActions>
            <HeaderButton aria-label="앱"><AppsIcon /></HeaderButton>
            <HeaderButton aria-label="도움말"><MdHelp size={38} /></HeaderButton>
            <HeaderButton aria-label="계정"><AvatarIcon /></HeaderButton>
          </HeaderActions>
        </Header>
        <Body>
          <Rail aria-label="제품">
            <RailLink href="#" aria-label="홈"><HomeIcon /></RailLink>
            <RailLink href="#" aria-label="보고서" $active><MdInsertChart size={40} /></RailLink>
            <RailLink href="#" aria-label="탐색"><ExploreIcon /></RailLink>
            <RailLink href="#" aria-label="광고"><MdAdsClick size={38} /></RailLink>
            <RailLink href="#" aria-label="관리" $bottom><MdSettings size={40} /></RailLink>
          </Rail>
          <Menu aria-label="보고서">
            <MenuLink href="#">보고서 개요</MenuLink>
            <MenuLink href="#" $active aria-current="page">실시간 개요</MenuLink>
            <MenuLink href="#">실시간 페이지</MenuLink>
            <MenuRule />
            <MenuHeading aria-expanded="true">비즈니스 목표<MdKeyboardArrowUp size={32} /></MenuHeading>
            <MenuGroups groups={businessGroups} />
            <MenuRule />
            <MenuHeading aria-expanded="true">사용자<MdKeyboardArrowUp size={32} /></MenuHeading>
            <MenuGroups groups={userGroups} />
            <MenuFoot>
              <LibraryLink href="#"><MdOutlineFolder size={31} />라이브러리</LibraryLink>
              <FootRule />
              <CollapseRow>
                <IconButton aria-label="메뉴 접기"><CollapseIcon /></IconButton>
              </CollapseRow>
            </MenuFoot>
          </Menu>
          <Main>
            <Toolbar>
              <ToolbarLeft>
                <RoundButton $filled>모</RoundButton>
                <RoundButton aria-label="비교 추가"><PlusIcon /></RoundButton>
                <ToolbarRule />
                <PageTitle>실시간 개요</PageTitle>
                <StatusPill aria-label="데이터 상태">
                  <MdOutlineCheckCircle size={34} color="#2d6e36" />
                  <MdArrowDropDown size={34} />
                </StatusPill>
              </ToolbarLeft>
              <ToolbarRight>
                <OverviewButton><PersonFrameIcon /><span>사용자 개요 보기</span></OverviewButton>
                <IconButton aria-label="전체 화면"><MdFullscreen size={40} /></IconButton>
                <IconButton aria-label="비교"><CompareIcon /></IconButton>
                <IconButton aria-label="공유"><MdOutlineShare size={38} /></IconButton>
              </ToolbarRight>
            </Toolbar>
            <ScrollThumb />
            <MapSection>
              <MapFrame>
                <RegionMap />
                <ZoomControl>
                  <ZoomButton aria-label="확대" $muted><ZoomGlyph plus /></ZoomButton>
                  <ZoomRule />
                  <ZoomButton aria-label="축소"><ZoomGlyph /></ZoomButton>
                </ZoomControl>
                <MapCredits>
                  <button>Keyboard shortcuts</button>
                  <span>Map data ©2024 TMap Mobility</span>
                  <a href="#">Terms</a>
                </MapCredits>
              </MapFrame>
              <LiveCard>
                <LiveStats>
                  <LiveStat>
                    <Hinted><LiveLabel>지난 30분 동안의 활성 사용자</LiveLabel></Hinted>
                    <LiveValue>1</LiveValue>
                  </LiveStat>
                  <LiveStat>
                    <Hinted><LiveLabel>지난 5분 동안의 활성 사용자 수</LiveLabel></Hinted>
                    <LiveValue>0</LiveValue>
                  </LiveStat>
                </LiveStats>
                <LiveLabel>분당 활성 사용자</LiveLabel>
                <MinuteChart />
              </LiveCard>
            </MapSection>
            <Cards>
              {reports.map((report) => <ReportCard key={report.id} report={report} />)}
            </Cards>
          </Main>
        </Body>
      </Shell>
    </>
  );
}
